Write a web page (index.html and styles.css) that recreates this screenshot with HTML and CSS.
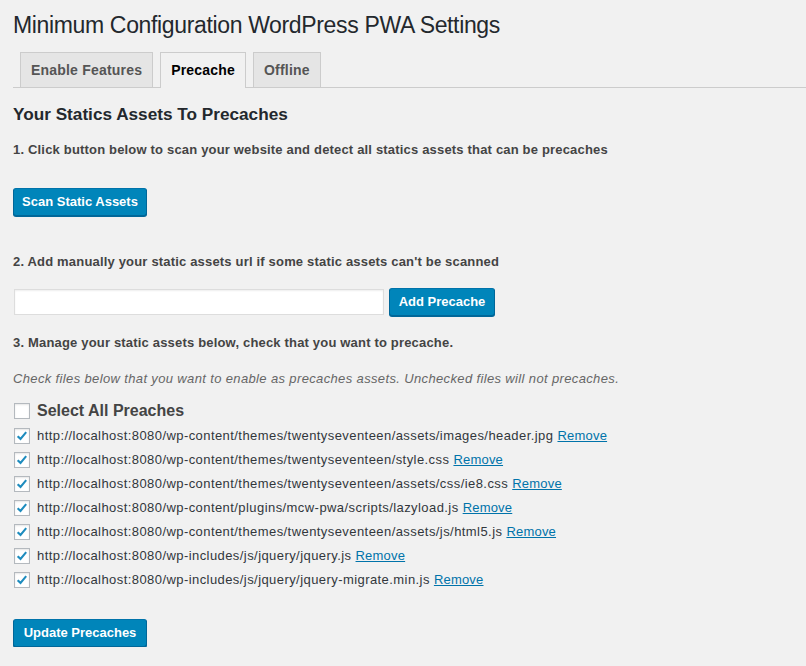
FILE: index.html
```html
<!DOCTYPE html>
<html>
<head>
<meta charset="utf-8">
<link rel="stylesheet" href="styles.css">
</head>
<body>
<div class="wrap">
  <h1 class="title">Minimum Configuration WordPress PWA Settings</h1>
  <nav class="tabs">
    <a class="tab">Enable Features</a>
    <a class="tab active">Precache</a>
    <a class="tab">Offline</a>
  </nav>
  <h2 class="section-title">Your Statics Assets To Precaches</h2>
  <p class="step step-1">1. Click button below to scan your website and detect all statics assets that can be precaches</p>
  <button class="btn btn-scan">Scan Static Assets</button>
  <p class="step step-2">2. Add manually your static assets url if some static assets can't be scanned</p>
  <div class="add-row">
    <input class="url-input" type="text">
    <button class="btn btn-add">Add Precache</button>
  </div>
  <p class="step step-3">3. Manage your static assets below, check that you want to precache.</p>
  <p class="note">Check files below that you want to enable as precaches assets. Unchecked files will not precaches.</p>
  <div class="list">
    <label class="row select-all"><span class="cb"></span>Select All Preaches</label>
    <div class="row"><span class="cb checked"><svg viewBox="0 0 16 16"><path d="M3 8.2 L6.3 11.3 L12.8 3.6"/></svg></span><span>http://localhost:8080/wp-content/themes/twentyseventeen/assets/images/header.jpg <a class="remove">Remove</a></span></div>
    <div class="row"><span class="cb checked"><svg viewBox="0 0 16 16"><path d="M3 8.2 L6.3 11.3 L12.8 3.6"/></svg></span><span>http://localhost:8080/wp-content/themes/twentyseventeen/style.css <a class="remove">Remove</a></span></div>
    <div class="row"><span class="cb checked"><svg viewBox="0 0 16 16"><path d="M3 8.2 L6.3 11.3 L12.8 3.6"/></svg></span><span>http://localhost:8080/wp-content/themes/twentyseventeen/assets/css/ie8.css <a class="remove">Remove</a></span></div>
    <div class="row"><span class="cb checked"><svg viewBox="0 0 16 16"><path d="M3 8.2 L6.3 11.3 L12.8 3.6"/></svg></span><span>http://localhost:8080/wp-content/plugins/mcw-pwa/scripts/lazyload.js <a class="remove">Remove</a></span></div>
    <div class="row"><span class="cb checked"><svg viewBox="0 0 16 16"><path d="M3 8.2 L6.3 11.3 L12.8 3.6"/></svg></span><span>http://localhost:8080/wp-content/themes/twentyseventeen/assets/js/html5.js <a class="remove">Remove</a></span></div>
    <div class="row"><span class="cb checked"><svg viewBox="0 0 16 16"><path d="M3 8.2 L6.3 11.3 L12.8 3.6"/></svg></span><span>http://localhost:8080/wp-includes/js/jquery/jquery.js <a class="remove">Remove</a></span></div>
    <div class="row"><span class="cb checked"><svg viewBox="0 0 16 16"><path d="M3 8.2 L6.3 11.3 L12.8 3.6"/></svg></span><span>http://localhost:8080/wp-includes/js/jquery/jquery-migrate.min.js <a class="remove">Remove</a></span></div>
  </div>
  <button class="btn btn-update">Update Precaches</button>
</div>
</body>
</html>
```
FILE: styles.css
```css
html, body {
  margin: 0;
  padding: 0;
  background: #f1f1f1;
}
body {
  font-family: "Liberation Sans", Arial, sans-serif;
  color: #444;
  font-size: 13px;
}
.wrap {
  padding: 0 0 0 13px;
}
.title {
  margin: 0;
  padding-top: 11px;
  font-size: 23px;
  font-weight: 400;
  line-height: 29px;
  letter-spacing: -0.35px;
  color: #23282d;
}
.tabs {
  display: flex;
  gap: 7px;
  margin-top: 12px;
  padding-left: 7px;
  border-bottom: 1px solid #ccc;
  height: 35px;
  align-items: flex-end;
}
.tab {
  box-sizing: border-box;
  height: 35px;
  padding: 0 10px;
  line-height: 34px;
  font-size: 14px;
  font-weight: 700;
  letter-spacing: 0.2px;
  color: #555;
  background: #e5e5e5;
  border: 1px solid #ccc;
  border-bottom: none;
}
.tab.active {
  background: #f1f1f1;
  color: #000;
  height: 36px;
  margin-bottom: -1px;
}
.section-title {
  margin: 15px 0 0;
  font-size: 17.2px;
  font-weight: 700;
  line-height: 22px;
  color: #23282d;
}
.step {
  margin: 0;
  font-weight: 700;
  line-height: 18px;
  letter-spacing: 0.18px;
  color: #444;
}
.step-1 { margin-top: 16px; }
.step-2 { margin-top: 37px; }
.step-3 { margin-top: 18px; }
.btn {
  display: inline-block;
  box-sizing: border-box;
  height: 28px;
  padding: 0 4px 1px;
  font-family: inherit;
  font-size: 13px;
  font-weight: 700;
  line-height: 26px;
  white-space: nowrap;
  text-align: center;
  color: #fff;
  background: #0085ba;
  border: 1px solid;
  border-color: #0073aa #006799 #006799;
  border-radius: 3px;
  box-shadow: 0 1px 0 #006799;
}
.btn-scan {
  margin-top: 29px;
  width: 134px;
  display: block;
}
.add-row {
  display: flex;
  align-items: center;
  gap: 5px;
  margin-top: 17px;
}
.url-input {
  box-sizing: border-box;
  width: 370px;
  height: 26px;
  margin: 0 0 0 1px;
  border: 1px solid #ddd;
  background: #fff;
  box-shadow: inset 0 1px 2px rgba(0,0,0,0.07);
}
.btn-add {
  width: 106px;
}
.note {
  margin: 18px 0 0;
  font-style: italic;
  color: #666;
  line-height: 18px;
  letter-spacing: 0.36px;
}
.list {
  margin-top: 11px;
}
.row {
  display: flex;
  align-items: center;
  height: 24px;
  gap: 7px;
  color: #32373c;
  line-height: 24px;
  letter-spacing: 0.43px;
}
.select-all {
  font-size: 16px;
  font-weight: 700;
  color: #444;
  gap: 7px;
  letter-spacing: 0;
  margin-bottom: 1px;
}
.cb {
  box-sizing: border-box;
  width: 16px;
  height: 16px;
  margin-left: 1px;
  border: 1px solid #b4b9be;
  background: #fff;
  box-shadow: inset 0 1px 2px rgba(0,0,0,0.1);
  display: flex;
  align-items: center;
  justify-content: center;
  flex: none;
}
.cb svg {
  width: 14px;
  height: 14px;
}
.cb svg path {
  fill: none;
  stroke: #1e8cbe;
  stroke-width: 2.4;
}
.remove {
  color: #0073aa;
  text-decoration: underline;
  letter-spacing: 0.2px;
}
.btn-update {
  display: block;
  margin-top: 27px;
  width: 134px;
}
```
